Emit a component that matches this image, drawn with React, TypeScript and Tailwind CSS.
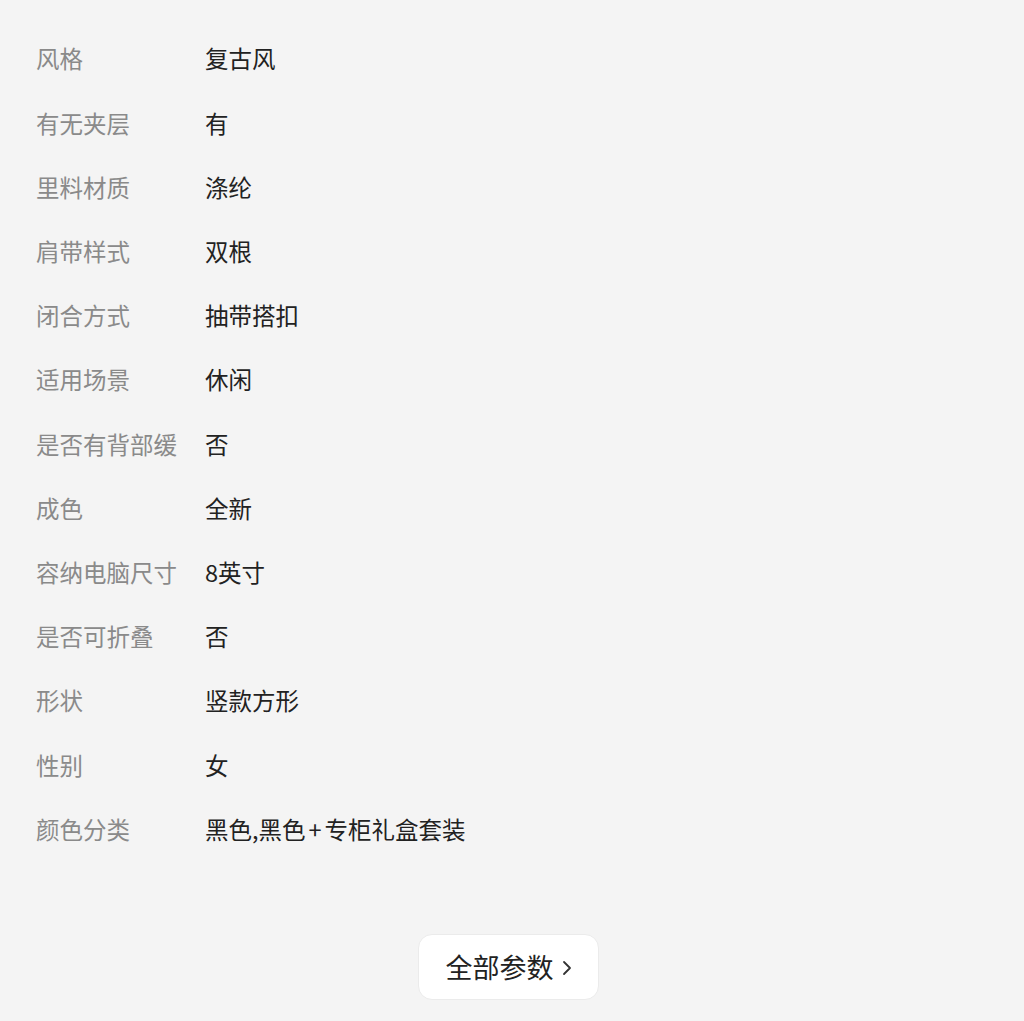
const params: [string, string][] = [
  ["风格", "复古风"],
  ["有无夹层", "有"],
  ["里料材质", "涤纶"],
  ["肩带样式", "双根"],
  ["闭合方式", "抽带搭扣"],
  ["适用场景", "休闲"],
  ["是否有背部缓", "否"],
  ["成色", "全新"],
  ["容纳电脑尺寸", "8英寸"],
  ["是否可折叠", "否"],
  ["形状", "竖款方形"],
  ["性别", "女"],
  ["颜色分类", "黑色,黑色+专柜礼盒套装"],
];

function Value({ text }: { text: string }) {
  const parts = text.split("+");
  return (
    <div className="text-[#222] whitespace-nowrap">
      {parts.map((p, i) => (
        <span key={i}>
          {i > 0 && <span className="mx-[3px]">+</span>}
          {p}
        </span>
      ))}
    </div>
  );
}

export default function App() {
  return (
    <div
      className="w-[1024px] h-[1021px] bg-[#f4f4f4] overflow-hidden"
      style={{ fontFamily: '"Microsoft YaHei", "Noto Sans CJK SC", sans-serif' }}
    >
      <div className="pt-[27px] pl-[36px]">
        {params.map(([label, value], i) => (
          <div key={i} className="flex items-center h-[64.2px] text-[23.5px]">
            <div className="w-[169px] text-[#8a8a8a] whitespace-nowrap">{label}</div>
            <Value text={value} />
          </div>
        ))}
      </div>
      <div className="flex justify-center pr-[7px] mt-[73px]">
        <button className="w-[181px] h-[66px] bg-white rounded-[14px] border border-[#ebebeb] flex items-center justify-center gap-[8px] text-[27px] text-[#222]">
          <span>全部参数</span>
          <svg width="10" height="18" viewBox="0 0 10 18" fill="none" className="mt-[2px]">
            <path d="M2 3l6 6-6 6" stroke="#333" strokeWidth="1.8" strokeLinecap="round" strokeLinejoin="round" />
          </svg>
        </button>
      </div>
    </div>
  );
}
